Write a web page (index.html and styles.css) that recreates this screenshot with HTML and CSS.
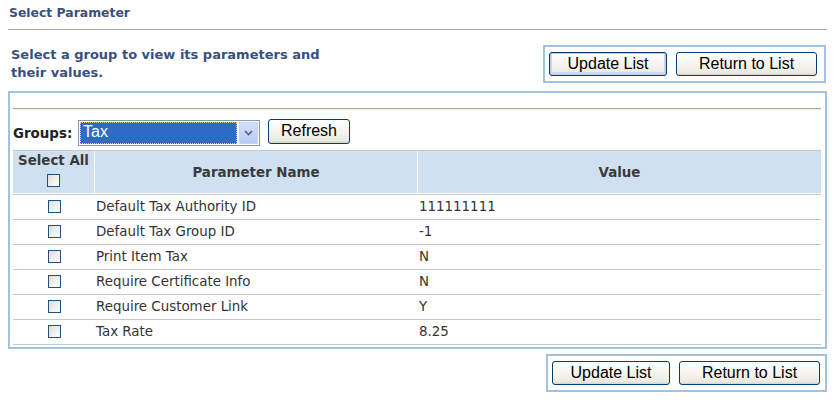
FILE: index.html
```html
<!DOCTYPE html>
<html>
<head>
<meta charset="utf-8">
<link rel="stylesheet" href="styles.css">
</head>
<body>
<div class="title">Select Parameter</div>
<div class="intro">
  <div class="intro-text">Select a group to view its parameters and their values.</div>
  <div class="btnbox">
    <button class="btn btn-update default">Update List</button>
    <button class="btn btn-return">Return to List</button>
  </div>
</div>
<div class="panel">
  <div class="rule"></div>
  <div class="groups">
    <span class="groups-label">Groups:</span>
    <div class="select">
      <span class="select-value">Tax</span>
      <span class="select-arrow"><svg width="9" height="6" viewBox="0 0 9 6"><path d="M1 1 L4.5 4.5 L8 1" fill="none" stroke="#4d6185" stroke-width="1.6"/></svg></span>
    </div>
    <button class="btn btn-refresh">Refresh</button>
  </div>
  <table class="params">
    <thead>
      <tr>
        <th class="c-sel"><div>Select All</div><span class="cb cb-head"></span></th>
        <th class="c-name">Parameter Name</th>
        <th class="c-val">Value</th>
      </tr>
    </thead>
    <tbody>
      <tr><td class="c-sel"><span class="cb"></span></td><td class="c-name">Default Tax Authority ID</td><td class="c-val">111111111</td></tr>
      <tr><td class="c-sel"><span class="cb"></span></td><td class="c-name">Default Tax Group ID</td><td class="c-val">-1</td></tr>
      <tr><td class="c-sel"><span class="cb"></span></td><td class="c-name">Print Item Tax</td><td class="c-val">N</td></tr>
      <tr><td class="c-sel"><span class="cb"></span></td><td class="c-name">Require Certificate Info</td><td class="c-val">N</td></tr>
      <tr><td class="c-sel"><span class="cb"></span></td><td class="c-name">Require Customer Link</td><td class="c-val">Y</td></tr>
      <tr><td class="c-sel"><span class="cb"></span></td><td class="c-name">Tax Rate</td><td class="c-val">8.25</td></tr>
    </tbody>
  </table>
</div>
<div class="bottom">
  <div class="btnbox btnbox-bottom">
    <button class="btn btn-update">Update List</button>
    <button class="btn btn-return">Return to List</button>
  </div>
</div>
</body>
</html>
```
FILE: styles.css
```css
html, body {
  margin: 0;
  padding: 0;
  background: #fff;
}
body {
  margin: 8px;
  font-family: "DejaVu Sans", Verdana, sans-serif;
  color: #333;
}
.title {
  margin-top: -2px;
  padding: 0 0 9px 1px;
  line-height: 14px;
  font-size: 12.4px;
  font-weight: bold;
  color: #3b5078;
  border-bottom: 1px solid #aca899;
}
.intro {
  display: flex;
  justify-content: space-between;
  align-items: flex-start;
  margin-top: 15px;
}
.intro-text {
  width: 330px;
  padding: 1px 0 0 3px;
  font-size: 13px;
  line-height: 18px;
  font-weight: bold;
  color: #37507f;
}
.btnbox {
  display: flex;
  gap: 9px;
  border: 2px solid #a3c2df;
  padding: 5px 7px 5px 4px;
  margin-right: 1px;
}
.btn {
  font-family: "Liberation Sans", Arial, sans-serif;
  font-size: 16px;
  color: #000;
  height: 24px;
  padding: 0;
  margin: 0;
  border: 1px solid #003c74;
  border-radius: 3px;
  background: linear-gradient(#ffffff 0%, #f6f5f0 50%, #ebe9df 90%, #d8d4c6 100%);
  line-height: 20px;
}
.btn-update { width: 118px; }
.btn-return { width: 141px; }
.btn.default {
  box-shadow: inset 0 0 0 1px #b9cdf2, inset 0 -1px 0 2px #cad9f5;
}
.panel {
  margin-top: 8px;
  border: 2px solid #a3c2df;
  padding: 0 4px 2px 3px;
}
.rule {
  margin-top: 15px;
  border-top: 1px solid #aca899;
  border-bottom: 1px solid #f1efe2;
}
.groups {
  display: flex;
  align-items: center;
  height: 28px;
  margin-top: 7px;
}
.groups-label {
  font-size: 13.4px;
  font-weight: bold;
  color: #222;
  width: 65px;
  padding-top: 4px;
}
.select {
  width: 178px;
  height: 22px;
  border: 1px solid #7f9db9;
  display: flex;
  align-items: stretch;
  padding: 1px;
  gap: 2px;
  margin-top: 3px;
  background: #fff;
}
.select-value {
  flex: 1;
  background: #316ac5;
  color: #fff;
  font-family: "Liberation Sans", Arial, sans-serif;
  font-size: 16px;
  line-height: 20px;
  padding-left: 3px;
  outline: 1px dotted #e8c97a;
  outline-offset: -1px;
}
.select-arrow {
  width: 19px;
  display: flex;
  align-items: center;
  justify-content: center;
  background: linear-gradient(#d3defa, #b8cbf6);
  border: 1px solid #c4d3f4;
  box-sizing: border-box;
}
.btn-refresh {
  width: 82px;
  height: 25px;
  margin-left: 8px;
}
.params {
  width: 808px;
  margin-top: 5px;
  border-collapse: separate;
  border-spacing: 0;
  border-top: 1px solid #c8c8c8;
  font-size: 13.4px;
}
.params th {
  background: #cfe0f0;
  height: 41px;
  padding: 0;
  font-weight: bold;
  color: #3a3a3a;
  border-bottom: 1px solid #fff;
  border-right: 1px solid #fff;
  vertical-align: middle;
}
.params th:last-child { border-right: 0; }
.params th.c-sel {
  width: 81px;
  vertical-align: top;
  padding-top: 1px;
  line-height: 17px;
}
.params th.c-name { width: 322px; }
.params td {
  height: 24px;
  padding: 0;
  border-bottom: 1px solid #c8c8c8;
  color: #333;
  line-height: 16px;
}
.params tbody tr:first-child td { border-top: 1px solid #c8c8c8; }
.params td.c-sel { text-align: center; }
.params td.c-name { padding-left: 1px; }
.params td.c-val { padding-left: 1px; }
.cb {
  display: inline-block;
  width: 13px;
  height: 13px;
  box-sizing: border-box;
  border: 1px solid #1c5180;
  background: linear-gradient(135deg, #dcdcd7 0%, #f2f2ef 60%, #fff 100%);
  vertical-align: middle;
  margin-top: -2px;
}
.cb-head {
  display: block;
  margin: 5px auto 0;
}
.bottom {
  display: flex;
  justify-content: flex-end;
  margin-top: 5px;
}
.btnbox-bottom {
  margin-right: 0;
  padding-right: 5px;
}
```
